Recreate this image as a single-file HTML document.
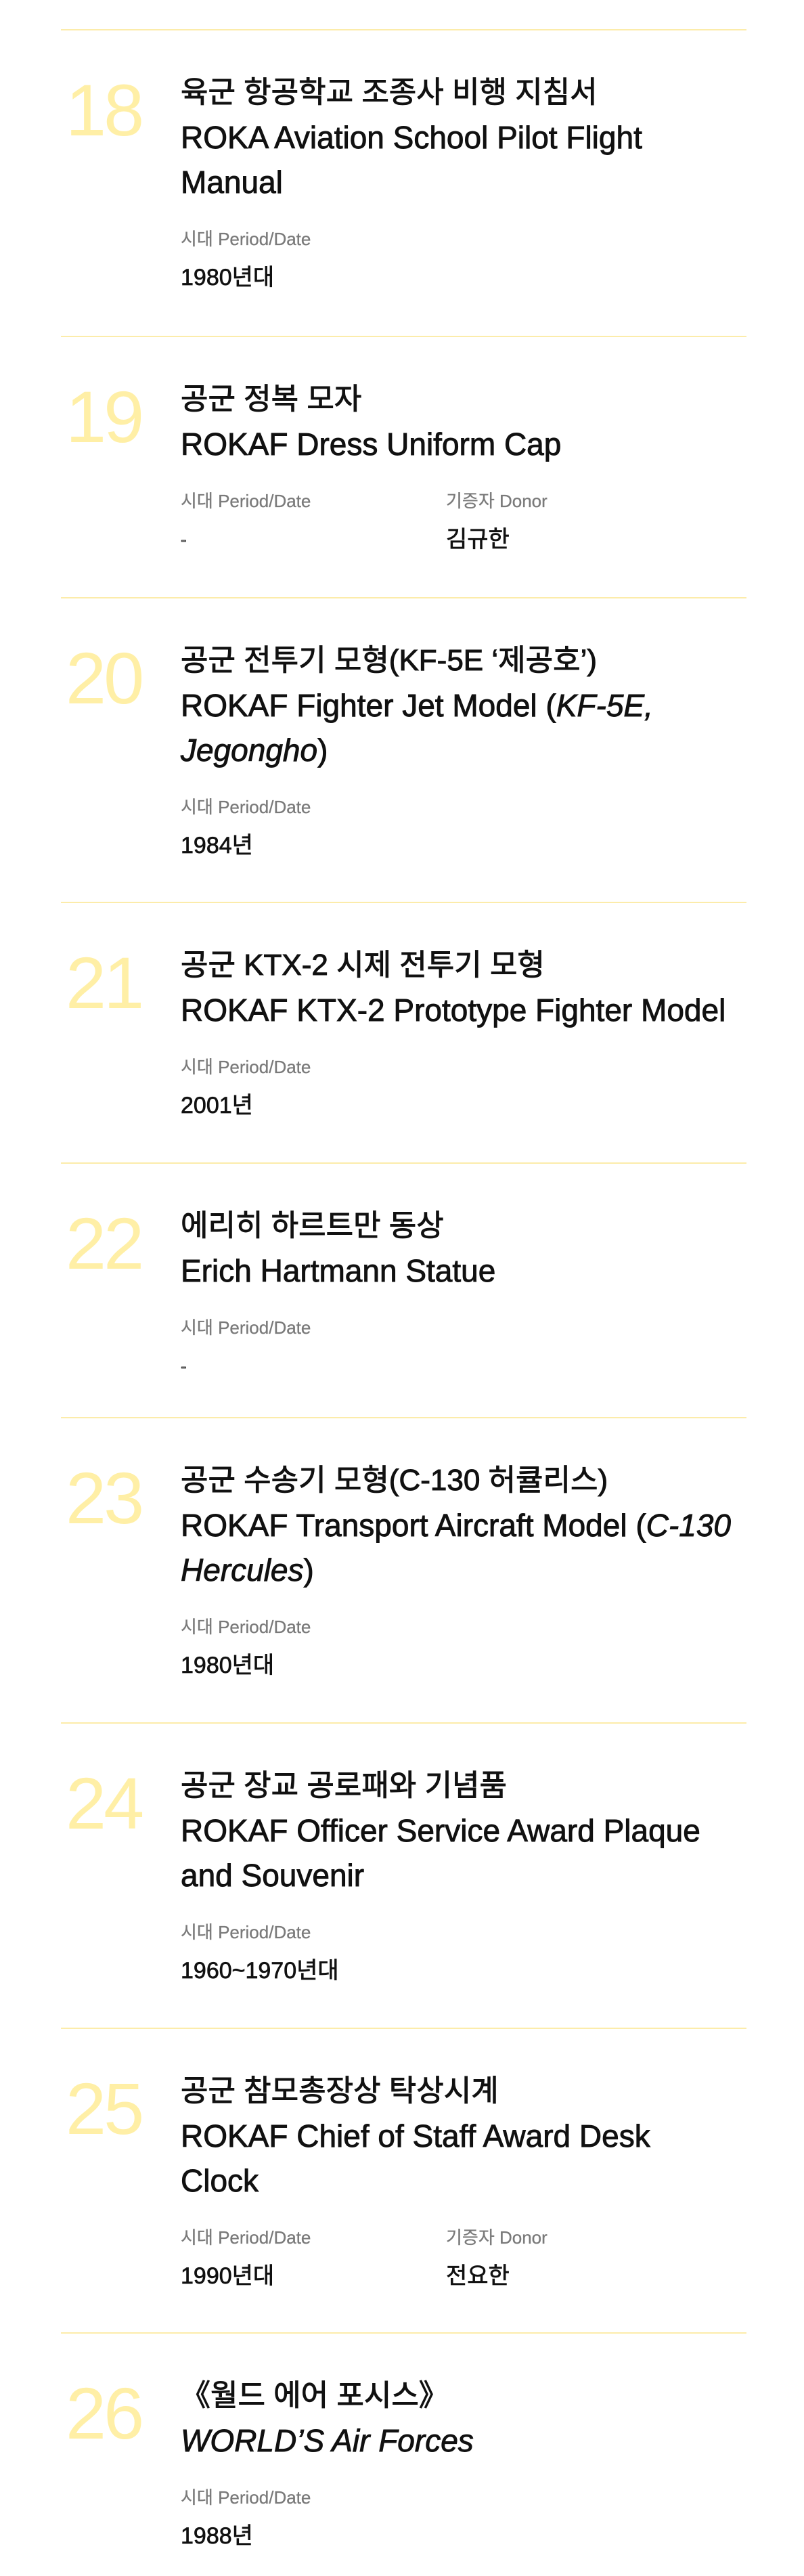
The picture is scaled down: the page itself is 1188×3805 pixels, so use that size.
<!DOCTYPE html>
<html><head><meta charset="utf-8"><style>
*{margin:0;padding:0;box-sizing:border-box}
body{width:1188px;height:3787px;background:#fff;overflow:hidden;font-family:"Liberation Sans","Noto Sans CJK KR",sans-serif;color:#111}
.wrap{position:absolute;left:90px;top:43px;width:1013px}
.sec{position:relative;border-top:2px solid #fcecaa}
.num{position:absolute;left:7px;top:64px;font-size:108px;line-height:1;color:#ffefa6;letter-spacing:-4px}
.body{position:absolute;left:177px;top:59px;width:840px}
.t{font-size:46px;line-height:66px;white-space:nowrap;-webkit-text-stroke:0.9px #111}
.t.k{font-size:44px;-webkit-text-stroke:1px #111}
.meta{display:flex;margin-top:33px}
.col{width:392px}
.lab{font-size:26px;line-height:36px;color:#7a7a7a;-webkit-text-stroke:0.3px #7a7a7a}
.val{font-size:34px;line-height:44px;margin-top:17px;-webkit-text-stroke:0.7px #111}
.dash{font-size:26px;color:#888}
</style></head><body>
<div class="wrap">
<div class="sec" style="height:453px"><div class="num">18</div><div class="body">
<div class="t k">육군 항공학교 조종사 비행 지침서</div>
<div class="t">ROKA Aviation School Pilot Flight<br>Manual</div>
<div class="meta"><div class="col"><div class="lab">시대 Period/Date</div><div class="val">1980년대</div></div></div></div></div>

<div class="sec" style="height:386px"><div class="num">19</div><div class="body">
<div class="t k">공군 정복 모자</div>
<div class="t">ROKAF Dress Uniform Cap</div>
<div class="meta"><div class="col"><div class="lab">시대 Period/Date</div><div class="val dash">-</div></div><div class="col"><div class="lab">기증자 Donor</div><div class="val">김규한</div></div></div></div></div>

<div class="sec" style="height:450px"><div class="num">20</div><div class="body">
<div class="t k">공군 전투기 모형(KF-5E ‘제공호’)</div>
<div class="t">ROKAF Fighter Jet Model (<i>KF-5E,<br>Jegongho</i>)</div>
<div class="meta"><div class="col"><div class="lab">시대 Period/Date</div><div class="val">1984년</div></div></div></div></div>

<div class="sec" style="height:385px"><div class="num">21</div><div class="body">
<div class="t k">공군 KTX-2 시제 전투기 모형</div>
<div class="t">ROKAF KTX-2 Prototype Fighter Model</div>
<div class="meta"><div class="col"><div class="lab">시대 Period/Date</div><div class="val">2001년</div></div></div></div></div>

<div class="sec" style="height:376px"><div class="num">22</div><div class="body">
<div class="t k">에리히 하르트만 동상</div>
<div class="t">Erich Hartmann Statue</div>
<div class="meta"><div class="col"><div class="lab">시대 Period/Date</div><div class="val dash">-</div></div></div></div></div>

<div class="sec" style="height:451px"><div class="num">23</div><div class="body">
<div class="t k">공군 수송기 모형(C-130 허큘리스)</div>
<div class="t">ROKAF Transport Aircraft Model (<i>C-130<br>Hercules</i>)</div>
<div class="meta"><div class="col"><div class="lab">시대 Period/Date</div><div class="val">1980년대</div></div></div></div></div>

<div class="sec" style="height:451px"><div class="num">24</div><div class="body">
<div class="t k">공군 장교 공로패와 기념품</div>
<div class="t">ROKAF Officer Service Award Plaque<br>and Souvenir</div>
<div class="meta"><div class="col"><div class="lab">시대 Period/Date</div><div class="val">1960~1970년대</div></div></div></div></div>

<div class="sec" style="height:450px"><div class="num">25</div><div class="body">
<div class="t k">공군 참모총장상 탁상시계</div>
<div class="t">ROKAF Chief of Staff Award Desk<br>Clock</div>
<div class="meta"><div class="col"><div class="lab">시대 Period/Date</div><div class="val">1990년대</div></div><div class="col"><div class="lab">기증자 Donor</div><div class="val">전요한</div></div></div></div></div>

<div class="sec" style="height:360px"><div class="num">26</div><div class="body">
<div class="t k">《월드 에어 포시스》</div>
<div class="t"><i>WORLD’S Air Forces</i></div>
<div class="meta"><div class="col"><div class="lab">시대 Period/Date</div><div class="val">1988년</div></div></div></div></div>
</div>
</body></html>
